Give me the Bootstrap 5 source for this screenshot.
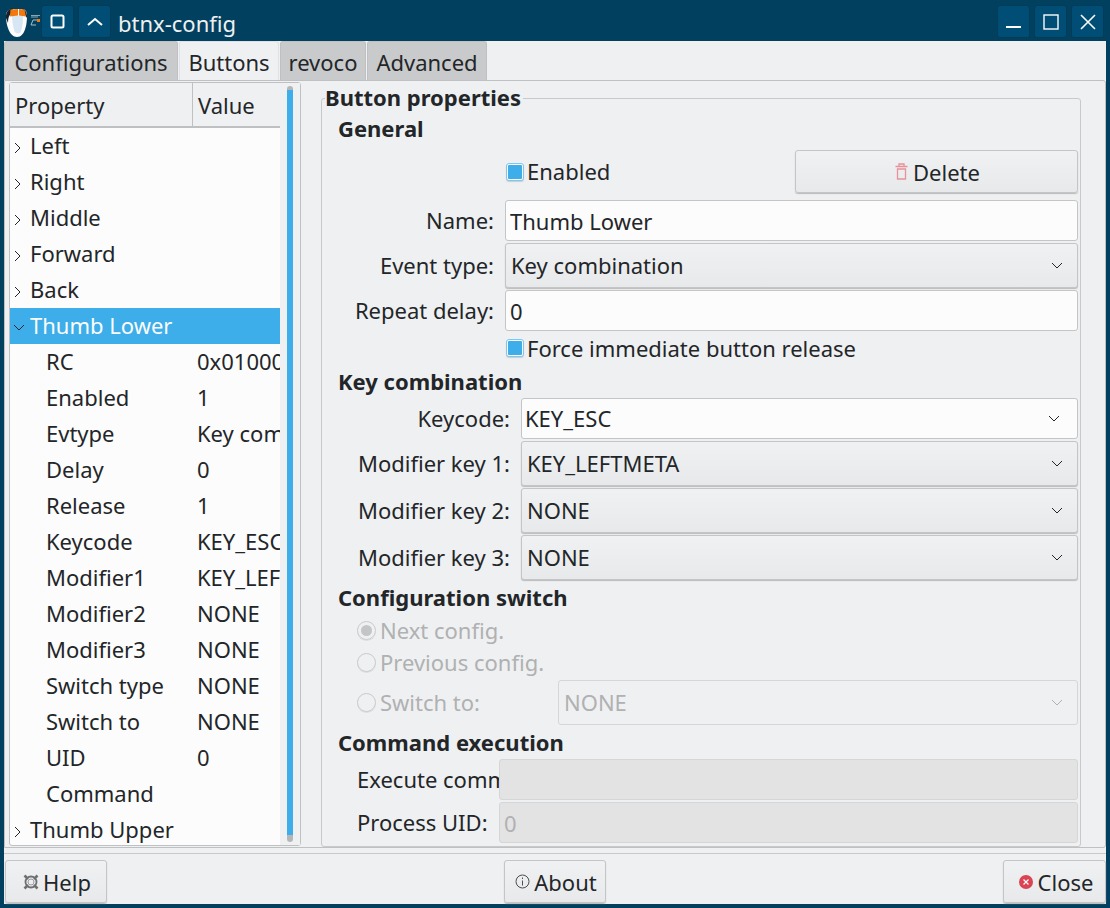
<!DOCTYPE html>
<html>
<head>
    <title>btnx-config</title>
    <link href="https://cdn.jsdelivr.net/npm/bootstrap@5.3.0/dist/css/bootstrap.min.css" rel="stylesheet">
    <style>
        html, body { margin: 0; height: 908px; overflow: hidden; background: #02405f; }
        body, input, select, button { font-family: "Noto Sans", sans-serif; font-size: 22px; color: #232629; }
        .win { width: 1110px; height: 908px; }
        .titlebar { height: 41px; padding: 5px 6px 3px 5px; background: #02405f; }
        .tb-btn { width: 33px; height: 33px; background: #004e76; border: 1px solid #033c58; border-radius: 3px; padding: 0; }
        .tb-title { color: #eff0f1; margin-left: 7px; line-height: 37px; }
        .client { width: 1102px; height: 863px; margin-left: 4px; background: #eff0f1; }

        .tabstrip { height: 39px; gap: 1px; border: 0; }
        .tabstrip .nav-link { height: 39px; padding: 4px 0 0; text-align: center; border: 1px solid #bfc0c1; border-bottom: 0; border-radius: 3px 3px 0 0; background: #c9cacb; color: #232629; line-height: 32px; margin: 0; }
        .tabstrip .nav-link.active { background: #eff0f1; color: #232629; }
        .tab-conf { width: 174px; }
        .tab-btns { width: 100px; }
        .tab-rev { width: 86px; }
        .tab-adv { width: 120px; }
        .tabpane { height: 768px; border: 1px solid #bfc0c1; border-radius: 0 3px 3px 0; padding: 1px 0 0 4px; gap: 20px; overflow: hidden; }

        .treebox { width: 292px; height: 764px; background: #fcfcfc; border: 1px solid #bfc0c1; border-radius: 3px; }
        .treemain { width: 270px; overflow: hidden; }
        .treehead { height: 45px; background: #eff0f1; border-bottom: 2px solid #bfc0c1; }
        .treehead div { line-height: 44px; padding-left: 5px; }
        .treehead div:first-child { width: 183px; border-right: 1px solid #bfc0c1; }
        .treerow { height: 36px; line-height: 34px; white-space: nowrap; background: transparent; border: 0; padding: 0; color: #232629; }
        .treerow.picked { background: #3daee9; color: #fcfcfc; }
        .tree-arrow { width: 20px; flex: none; padding-left: 3px; }
        .tree-name { width: 187px; flex: none; padding-left: 36px; }
        .tree-top { padding-left: 0; width: auto; }
        .tree-val { overflow: hidden; width: 83px; }
        .treescroll { width: 20px; background: #eff0f1; padding: 3px 7px; flex: none; }
        .thumbtrack { height: 100%; width: 6px; background: #3daee9; border-radius: 3px; border-top: 4px solid #b5b6b7; border-bottom: 7px solid #b5b6b7; }

        .propgroup { width: 760px; height: 749px; margin-top: 16px; border: 1px solid #c8c9ca; border-radius: 3px; padding-left: 16px; padding-right: 2px; }
        .grouptitle { position: absolute; left: 3px; top: -14px; background: #eff0f1; padding-right: 2px; font-weight: 700; line-height: 24px; }
        .sect { font-weight: 700; line-height: 24px; }
        .frm-label { text-align: right; flex: none; white-space: nowrap; overflow: hidden; }
        .lab-a { width: 156px; margin-right: 11px; }
        .lab-b { width: 172px; margin-right: 11px; }
        .form-control.qt-field { height: 41px; border: 1px solid #c4c5c6; border-radius: 3px; background: #fcfcfc; padding: 0 4px; font-size: 22px; color: #232629; box-shadow: none; }
        .form-control.qt-field:disabled { background: #e3e3e3; color: #b0b1b2; border-color: #d5d6d7; }
        .form-select.qt-combo { height: 45px; border: 1px solid #c4c5c6; border-radius: 3px; padding: 0 40px 0 5px; font-size: 22px; color: #232629; background-color: #eff0f1;
            background-image: url("data:image/svg+xml,%3Csvg xmlns='http://www.w3.org/2000/svg' width='12' height='8'%3E%3Cpath d='M1 1l5 5 5-5' fill='none' stroke='%23232629' stroke-width='1'/%3E%3C/svg%3E"), linear-gradient(#f0f1f2, #e8e9ea);
            background-repeat: no-repeat; background-position: right 14px center, 0 0; background-size: 12px 8px, 100% 100%; box-shadow: 0 1px 1px #bbb; }
        .form-select.qt-combo.flat { padding-left: 3px; background-position: right 17px center; background-color: #fcfcfc; background-image: url("data:image/svg+xml,%3Csvg xmlns='http://www.w3.org/2000/svg' width='12' height='8'%3E%3Cpath d='M1 1l5 5 5-5' fill='none' stroke='%23232629' stroke-width='1'/%3E%3C/svg%3E"); background-size: 12px 8px; box-shadow: none; height: 41px; }
        .form-select.qt-combo:disabled { color: #b0b1b2; border-color: #d5d6d7; box-shadow: none; background-position: right 14px center; background-image: url("data:image/svg+xml,%3Csvg xmlns='http://www.w3.org/2000/svg' width='12' height='8'%3E%3Cpath d='M1 1l5 5 5-5' fill='none' stroke='%23b0b1b2' stroke-width='1'/%3E%3C/svg%3E"); background-size: 12px 8px; background-color: #eff0f1; }
        .qt-btn { height: 43px; border: 1px solid #c4c5c6; border-radius: 3px; background: linear-gradient(#f0f1f2, #e8e9ea); box-shadow: 0 1px 1px #bbb; color: #232629; font-size: 22px; padding: 0 0 0 2px; line-height: 1; }
        .qt-btn:hover { background: #e8e9ea; color: #232629; border-color: #c4c5c6; }
        .del-gap { gap: 5px; }
        .chk-box { width: 18px; height: 18px; flex: none; border: 1px solid #7cc6ef; border-radius: 3px; padding: 1px; background: #fcfcfc; margin-right: 3px; margin-left: 1px; box-shadow: 0 1px 1px #ccc; }
        .chk-box div { width: 100%; height: 100%; background: #3daee9; border-radius: 1px; }
        .radio-box { width: 19px; height: 19px; flex: none; border: 1px solid #c9cacb; border-radius: 50%; padding: 3px; margin-right: 4px; box-shadow: 0 1px 0 #ddd; }
        .radio-box div { width: 100%; height: 100%; background: #c4c5c6; border-radius: 50%; }
        .dim { color: #b0b1b2; }
        .footline { height: 8px; margin-top: -2px; border-bottom: 1px solid #c8c9ca; }
    </style>
</head>
<body>
<div class="win">
    <!-- Title bar -->
    <div class="titlebar d-flex align-items-start">
        <svg width="36" height="33" viewBox="0 0 36 33" class="flex-shrink-0">
            <path d="M1 11C1 6 4 4 7 4L17 4C20 4 22 6 22 11C22 19 20 32 12 32C4 32 1 19 1 11Z" fill="#fcfcfc"/>
            <path d="M1 13C0.500 7 4 3.500 7 3.500L8 3.500L6 9C4 10 3 13 3 18Z" fill="#16222b"/>
            <path d="M22 13C22.500 7 19 3.500 17 3.500L20 10Z" fill="#16222b"/>
            <path d="M7 10C10 11 14 11 18 10C18 17 17 25 15 28C12 29 10 28 9 25C8 21 7 15 7 10Z" fill="#d7e6f3"/>
            <path d="M5.500 4.500L13 4L13 10.500L5 11.500Z" fill="#f2770e"/>
            <path d="M14 4L19.500 4.500L21 11.500L14 10.500Z" fill="#f2770e"/>
            <path d="M26 20L28 15H34M26 20H31" fill="none" stroke="#a8bbc6" stroke-width="1"/>
            <path d="M32 14h3v3h-3z" fill="#f2770e"/>
            <path d="M26 10.500h9M26 12h7" stroke="#8aa4b2" stroke-width="1"/>
        </svg>
        <button class="tb-btn d-flex align-items-center justify-content-center ms-0"><svg width="15" height="15"><rect x="1.500" y="1.500" width="12" height="12" rx="1.500" fill="none" stroke="#fcfcfc" stroke-width="2"/></svg></button>
        <button class="tb-btn d-flex align-items-center justify-content-center ms-1"><svg width="16" height="10"><path d="M1 8l7-6 7 6" fill="none" stroke="#fcfcfc" stroke-width="2"/></svg></button>
        <div class="tb-title flex-grow-1">btnx-config</div>
        <button class="tb-btn d-flex align-items-center justify-content-center"><svg width="16" height="16"><rect x="0" y="12" width="15" height="2" fill="#fcfcfc"/></svg></button>
        <button class="tb-btn d-flex align-items-center justify-content-center ms-1"><svg width="16" height="16"><rect x="1" y="1" width="14" height="14" fill="none" stroke="#fcfcfc" stroke-width="1.400"/></svg></button>
        <button class="tb-btn d-flex align-items-center justify-content-center ms-1"><svg width="16" height="16"><path d="M1 1l14 14M15 1L1 15" stroke="#fcfcfc" stroke-width="1.600"/></svg></button>
    </div>

    <div class="client">
        <ul class="nav nav-tabs tabstrip">
            <li class="nav-item"><a class="nav-link tab-conf" href="#">Configurations</a></li>
            <li class="nav-item"><a class="nav-link tab-btns active" href="#">Buttons</a></li>
            <li class="nav-item"><a class="nav-link tab-rev" href="#">revoco</a></li>
            <li class="nav-item"><a class="nav-link tab-adv" href="#">Advanced</a></li>
        </ul>

        <div class="tabpane d-flex">
            <!-- Left tree -->
            <div class="treebox d-flex flex-shrink-0">
                <div class="treemain">
                    <div class="treehead d-flex"><div>Property</div><div>Value</div></div>
                    <div class="list-group list-group-flush" id="tree"></div>
                </div>
                <div class="treescroll"><div class="thumbtrack"></div></div>
            </div>

            <!-- Right group -->
            <div class="propgroup position-relative">
                <div class="grouptitle">Button properties</div>
                <div class="sect" style="margin-top:17px">General</div>
                <div class="d-flex align-items-center" style="margin-top:10px;height:43px">
                    <div style="width:167px"></div>
                    <div class="chk-box"><div></div></div><span>Enabled</span>
                    <button class="btn qt-btn ms-auto d-flex align-items-center justify-content-center del-gap" style="width:283px">
                        <svg width="13" height="17" viewBox="0 0 13 17"><path d="M2.500 6h8v10h-8zM0.500 3.500h12M4 3V1h5v2" fill="none" stroke="#e8919b" stroke-width="1.300"/></svg>Delete
                    </button>
                </div>
                <div class="d-flex align-items-center" style="margin-top:7px">
                    <div class="frm-label lab-a">Name:</div>
                    <input class="form-control qt-field" value="Thumb Lower">
                </div>
                <div class="d-flex align-items-center" style="margin-top:2px">
                    <div class="frm-label lab-a">Event type:</div>
                    <select class="form-select qt-combo"><option>Key combination</option></select>
                </div>
                <div class="d-flex align-items-center" style="margin-top:2px">
                    <div class="frm-label lab-a">Repeat delay:</div>
                    <input class="form-control qt-field" value="0">
                </div>
                <div class="d-flex align-items-center" style="height:34px">
                    <div style="width:167px"></div>
                    <div class="chk-box"><div></div></div><span>Force immediate button release</span>
                </div>

                <div class="sect" style="margin-top:4px">Key combination</div>
                <div class="d-flex align-items-center" style="margin-top:5px">
                    <div class="frm-label lab-b">Keycode:</div>
                    <select class="form-select qt-combo flat"><option>KEY_ESC</option></select>
                </div>
                <div class="d-flex align-items-center" style="margin-top:2px">
                    <div class="frm-label lab-b">Modifier key 1:</div>
                    <select class="form-select qt-combo"><option>KEY_LEFTMETA</option></select>
                </div>
                <div class="d-flex align-items-center" style="margin-top:2px">
                    <div class="frm-label lab-b">Modifier key 2:</div>
                    <select class="form-select qt-combo"><option>NONE</option></select>
                </div>
                <div class="d-flex align-items-center" style="margin-top:2px">
                    <div class="frm-label lab-b">Modifier key 3:</div>
                    <select class="form-select qt-combo"><option>NONE</option></select>
                </div>

                <div class="sect" style="margin-top:5px">Configuration switch</div>
                <div class="d-flex align-items-center dim" style="margin-top:5px;height:32px;padding-left:19px">
                    <div class="radio-box"><div></div></div><span>Next config.</span>
                </div>
                <div class="d-flex align-items-center dim" style="height:32px;padding-left:19px">
                    <div class="radio-box"></div><span>Previous config.</span>
                </div>
                <div class="d-flex align-items-center dim" style="margin-top:2px;padding-left:19px">
                    <div class="radio-box"></div><span style="width:178px;flex:none">Switch to:</span>
                    <select class="form-select qt-combo" disabled><option>NONE</option></select>
                </div>

                <div class="sect" style="margin-top:5px">Command execution</div>
                <div class="d-flex align-items-center" style="margin-top:5px">
                    <div class="frm-label" style="width:142px;margin-left:19px;text-align:left">Execute command:</div>
                    <input class="form-control qt-field" disabled>
                </div>
                <div class="d-flex align-items-center" style="margin-top:2px">
                    <div class="frm-label" style="width:142px;margin-left:19px;text-align:left">Process UID:</div>
                    <input class="form-control qt-field" disabled value="0">
                </div>
            </div>
        </div>

        <!-- Footer buttons -->
        <div class="footline"></div>
        <div class="d-flex justify-content-between" style="margin-top:6px;padding:0 0 0 1px">
            <button class="btn qt-btn d-flex align-items-center justify-content-center gap-1" style="width:102px">
                <svg width="16" height="16" viewBox="0 0 16 16"><circle cx="8" cy="8" r="5.500" fill="none" stroke="#6d6f71" stroke-width="1.800"/><circle cx="8" cy="8" r="3" fill="none" stroke="#9a9b9c" stroke-width="1"/><path d="M1.500 1.500l3.500 3.500M14.500 1.500l-3.500 3.500M1.500 14.500l3.500-3.500M14.500 14.500l-3.500-3.500" stroke="#6d6f71" stroke-width="2.600"/></svg>Help
            </button>
            <button class="btn qt-btn d-flex align-items-center justify-content-center gap-1" style="width:102px">
                <svg width="15" height="15" viewBox="0 0 15 15"><circle cx="7.500" cy="7.500" r="6.500" fill="none" stroke="#4d4d4d" stroke-width="1"/><path d="M7.500 6.500v5M7.500 3.500v1.500" stroke="#4d4d4d" stroke-width="1"/></svg>About
            </button>
            <button class="btn qt-btn d-flex align-items-center justify-content-center gap-1" style="width:103px">
                <svg width="16" height="16" viewBox="0 0 16 16"><circle cx="8" cy="8" r="7" fill="#da4453"/><path d="M5.500 5.500l5 5M10.500 5.500l-5 5" stroke="#fcfcfc" stroke-width="1.200"/></svg>Close
            </button>
        </div>
    </div>
</div>

<script>
    const rows = [
        ["Left", null, "closed"], ["Right", null, "closed"], ["Middle", null, "closed"],
        ["Forward", null, "closed"], ["Back", null, "closed"], ["Thumb Lower", null, "open"],
        ["RC", "0x01000"], ["Enabled", "1"], ["Evtype", "Key combination"], ["Delay", "0"],
        ["Release", "1"], ["Keycode", "KEY_ESC"], ["Modifier1", "KEY_LEFTMETA"], ["Modifier2", "NONE"],
        ["Modifier3", "NONE"], ["Switch type", "NONE"], ["Switch to", "NONE"], ["UID", "0"],
        ["Command", ""], ["Thumb Upper", null, "closed"]
    ];
    const closedArrow = '<svg width="10" height="14"><path d="M2 2l5 5-5 5" fill="none" stroke="#232629"/></svg>';
    const openArrow = '<svg width="14" height="10"><path d="M1 2l5 5 5-5" fill="none" stroke="#232629"/></svg>';
    const tree = document.getElementById("tree");
    rows.forEach(r => {
        const el = document.createElement("div");
        el.className = "list-group-item treerow d-flex" + (r[2] === "open" ? " picked" : "");
        if (r[2]) {
            el.innerHTML = `<div class="tree-arrow">${r[2] === "open" ? openArrow : closedArrow}</div><div class="tree-top">${r[0]}</div>`;
        } else {
            el.innerHTML = `<div class="tree-name">${r[0]}</div><div class="tree-val">${r[1]}</div>`;
        }
        tree.appendChild(el);
    });
</script>
<script src="https://cdn.jsdelivr.net/npm/bootstrap@5.3.0/dist/js/bootstrap.bundle.min.js"></script>
</body>
</html>
